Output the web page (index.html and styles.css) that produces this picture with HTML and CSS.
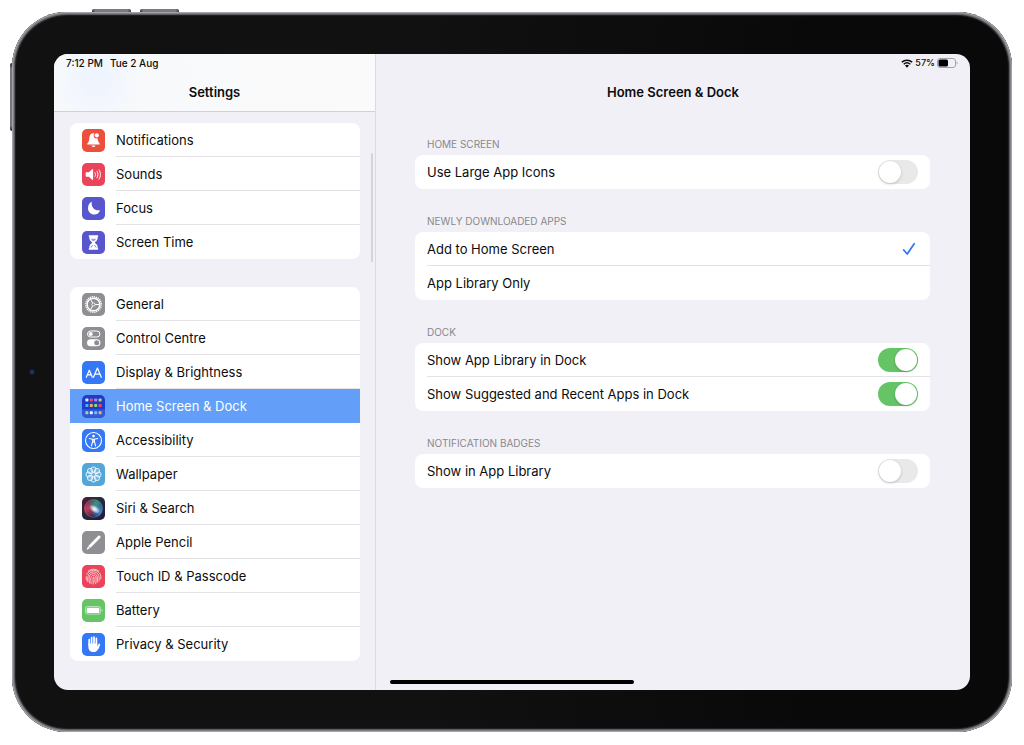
FILE: index.html
```html
<!DOCTYPE html>
<html lang="en-GB">
<head>
<meta charset="utf-8">
<meta name="viewport" content="width=device-width, initial-scale=1">
<title>Settings</title>
<link rel="stylesheet" href="styles.css">
</head>
<body>
<div class="device">
  <span class="hardware volume-up"></span>
  <span class="hardware volume-down"></span>
  <span class="hardware power"></span>
  <span class="camera"></span>
  <div class="screen">
    <aside class="sidebar">
      <header class="bar sidebar-bar">
        <div class="status"><span>7:12 PM</span><span>Tue 2 Aug</span></div>
        <h1 class="title">Settings</h1>
      </header>
      <nav class="menu" aria-label="Settings">
        <div class="card">
          <a class="item" href="#notifications">
            <svg class="icon" viewBox="0 0 23 23"><rect width="23" height="23" rx="5" fill="#eb4f3d"/><path d="M11.5 4.2c-2.8 0-4.1 2-4.1 4.4 0 3.1-.7 4.4-2 5.900-.5.6-.2 1.100.5 1.100h11.200c.7 0 1-.5.5-1.100-1.300-1.500-2-2.800-2-5.900 0-2.400-1.300-4.400-4.100-4.400zM9.600 16.400h3.800c-.2 1-1 1.600-1.900 1.600s-1.700-.6-1.900-1.600z" fill="#fff"/><circle cx="14.600" cy="6.500" r="2.900" fill="#eb4f3d"/><circle cx="14.800" cy="6.300" r="2.100" fill="#fff"/></svg>
            <span class="item-label">Notifications</span>
          </a>
          <a class="item" href="#sounds">
            <svg class="icon" viewBox="0 0 23 23"><rect width="23" height="23" rx="5" fill="#ea445a"/><path d="M4.300 9.300h2.500L10.200 6.300c.5-.4.9-.2.900.4v9.600c0 .6-.4.800-.9.400L6.800 13.700H4.300c-.4 0-.6-.3-.6-.7v-3c0-.4.2-.7.600-.7z" fill="#fff"/><path d="M13 9.700c.7 1.100.7 2.500 0 3.600M15 8.200c1.300 2 1.300 4.600 0 6.600M17 6.800c1.900 2.800 1.900 6.600 0 9.400" fill="none" stroke="#fff" stroke-width="1" stroke-linecap="round"/></svg>
            <span class="item-label">Sounds</span>
          </a>
          <a class="item" href="#focus">
            <svg class="icon" viewBox="0 0 23 23"><rect width="23" height="23" rx="5" fill="#5856ce"/><path d="M9.700 5.300c-.5 4.900 2.700 8.600 7.700 8 .4 0 .5.300.4.600-1 2.200-3 3.600-5.500 3.600-3.500 0-6.300-2.800-6.300-6.300 0-2.700 1.300-5.200 3.200-6.300.3-.2.600 0 .5.400z" fill="#fff"/></svg>
            <span class="item-label">Focus</span>
          </a>
          <a class="item" href="#screen-time">
            <svg class="icon" viewBox="0 0 23 23"><rect width="23" height="23" rx="5" fill="#5856ce"/><path d="M7.300 4.200h8.400c.8 0 .9 1.500 0 1.500.3 2.800-1 4.300-2.600 5.400-.4.300-.4.500 0 .8 1.600 1.100 2.900 2.600 2.600 5.400.9 0 .8 1.500 0 1.500H7.300c-.8 0-.9-1.500 0-1.500-.3-2.800 1-4.300 2.600-5.400.4-.3.400-.5 0-.8-1.600-1.100-2.900-2.600-2.600-5.400-.9 0-.8-1.500 0-1.500z" fill="#fff"/><path d="M8.900 7.800h5.200c-.5 1.300-1.300 1.900-2.100 2.500v3.400c1.300.5 2.300 1.300 2.700 2.800H8.300c.4-1.500 1.400-2.300 2.700-2.800v-3.400c-.8-.6-1.600-1.200-2.100-2.500z" fill="#5856ce" opacity=".6"/><path d="M11 10h1v4.500l2 2.500H9l2-2.500z" fill="#fff"/></svg>
            <span class="item-label">Screen Time</span>
          </a>
        </div>
        <div class="card">
          <a class="item" href="#general">
            <svg class="icon" viewBox="0 0 23 23"><rect width="23" height="23" rx="5" fill="#8e8e93"/><g fill="none" stroke="#fff"><circle cx="11.500" cy="11.500" r="7.700" stroke-width="1.500" stroke-dasharray="1.200 .816"/><circle cx="11.500" cy="11.500" r="6.300" stroke-width="1.400"/><circle cx="11.500" cy="11.500" r="1.600" stroke-width=".8"/><path d="M13.100 11.500h4.200M10.700 10.100 8.600 6.400M10.700 12.900l-2.100 3.700" stroke-width="1"/></g></svg>
            <span class="item-label">General</span>
          </a>
          <a class="item" href="#control-centre">
            <svg class="icon" viewBox="0 0 23 23"><rect width="23" height="23" rx="5" fill="#8e8e93"/><rect x="5.500" y="4" width="12.400" height="6" rx="3" fill="none" stroke="#fff"/><circle cx="8.700" cy="7" r="2" fill="#fff"/><rect x="5" y="12.300" width="13.400" height="7" rx="3.500" fill="#fff"/><circle cx="14.700" cy="15.800" r="2.500" fill="#8e8e93"/></svg>
            <span class="item-label">Control Centre</span>
          </a>
          <a class="item" href="#display">
            <svg class="icon" viewBox="0 0 23 23"><rect width="23" height="23" rx="5" fill="#3478f6"/><path d="M4.300 16.200 7.300 9.200l3 7M5.400 13.900h3.900M11.500 16.200l3.900-9.200 3.900 9.200M12.900 13.200h5" fill="none" stroke="#fff" stroke-width="1.200" stroke-linejoin="round" stroke-linecap="round"/></svg>
            <span class="item-label">Display &amp; Brightness</span>
          </a>
          <a class="item selected" href="#home-screen" aria-current="page">
            <svg class="icon" viewBox="0 0 23 23"><rect width="23" height="23" rx="5" fill="#1d3ccf"/><path d="M0 14.500h23V18a5 5 0 0 1-5 5H5a5 5 0 0 1-5-5z" fill="#3558d8"/><g><rect x="3.400" y="3.500" width="3" height="3" rx=".7" fill="#e6e9f6"/><rect x="7.800" y="3.500" width="3" height="3" rx=".7" fill="#ef4d54"/><rect x="12.200" y="3.500" width="3" height="3" rx=".7" fill="#c47be8"/><rect x="16.600" y="3.500" width="3" height="3" rx=".7" fill="#b5d65b"/><rect x="3.400" y="9" width="3" height="3" rx=".7" fill="#49b8ef"/><rect x="7.800" y="9" width="3" height="3" rx=".7" fill="#f2b33d"/><rect x="12.200" y="9" width="3" height="3" rx=".7" fill="#8fd96d"/><rect x="16.600" y="9" width="3" height="3" rx=".7" fill="#ef4d54"/><rect x="3.400" y="16.200" width="3" height="3" rx=".7" fill="#9be08c"/><rect x="7.800" y="16.200" width="3" height="3" rx=".7" fill="#f1f4ff"/><rect x="12.200" y="16.200" width="3" height="3" rx=".7" fill="#62cdf3"/><rect x="16.600" y="16.200" width="3" height="3" rx=".7" fill="#f4ad73"/></g></svg>
            <span class="item-label">Home Screen &amp; Dock</span>
          </a>
          <a class="item" href="#accessibility">
            <svg class="icon" viewBox="0 0 23 23"><rect width="23" height="23" rx="5" fill="#3478f6"/><circle cx="11.500" cy="11.500" r="8" fill="none" stroke="#fff" stroke-width="1.100"/><circle cx="11.500" cy="7.100" r="1.300" fill="#fff"/><path d="M7.300 9.500l3.300.7v2.500l-1.200 4.200M15.700 9.500l-3.300.7v2.500l1.200 4.200M10.800 10.200h1.400v2.800h-1.400z" fill="none" stroke="#fff" stroke-width="1.100" stroke-linecap="round" stroke-linejoin="round"/></svg>
            <span class="item-label">Accessibility</span>
          </a>
          <a class="item" href="#wallpaper">
            <svg class="icon" viewBox="0 0 23 23"><rect width="23" height="23" rx="5" fill="#55a6d8"/><g fill="#fff" fill-opacity=".1" stroke="#fff" stroke-width=".8"><circle cx="11.500" cy="6.500" r="2.600"/><circle cx="15" cy="8" r="2.600"/><circle cx="16.500" cy="11.500" r="2.600"/><circle cx="15" cy="15" r="2.600"/><circle cx="11.500" cy="16.500" r="2.600"/><circle cx="8" cy="15" r="2.600"/><circle cx="6.500" cy="11.500" r="2.600"/><circle cx="8" cy="8" r="2.600"/><circle cx="11.500" cy="11.500" r="2"/></g></svg>
            <span class="item-label">Wallpaper</span>
          </a>
          <a class="item" href="#siri">
            <svg class="icon" viewBox="0 0 23 23"><defs><linearGradient id="siri-base" x1="0" y1="0" x2="1" y2="1"><stop offset="0" stop-color="#5a1435"/><stop offset=".4" stop-color="#24303a"/><stop offset="1" stop-color="#211449"/></linearGradient><radialGradient id="siri-red" cx=".2" cy=".5" r=".55"><stop offset="0" stop-color="#d9375f"/><stop offset="1" stop-color="#d9375f" stop-opacity="0"/></radialGradient><radialGradient id="siri-teal" cx=".65" cy=".25" r=".5"><stop offset="0" stop-color="#3aa79c" stop-opacity=".9"/><stop offset="1" stop-color="#3aa79c" stop-opacity="0"/></radialGradient><radialGradient id="siri-blue" cx=".75" cy=".65" r=".4"><stop offset="0" stop-color="#4b9fe0"/><stop offset="1" stop-color="#4b8fe0" stop-opacity="0"/></radialGradient><radialGradient id="siri-glow"><stop offset="0" stop-color="#fff"/><stop offset=".4" stop-color="#fff" stop-opacity=".7"/><stop offset="1" stop-color="#fff" stop-opacity="0"/></radialGradient></defs><rect width="23" height="23" rx="5" fill="url(#siri-base)"/><circle cx="11.500" cy="11.500" r="9.500" fill="url(#siri-red)"/><circle cx="11.500" cy="11.500" r="9.500" fill="url(#siri-teal)"/><circle cx="11.500" cy="11.500" r="9.500" fill="url(#siri-blue)"/><ellipse cx="12.500" cy="12" rx="6" ry="3.600" transform="rotate(35 12.500 12)" fill="url(#siri-glow)"/><circle cx="11.500" cy="11.500" r="8.700" fill="none" stroke="#b0a0b3" stroke-opacity=".45" stroke-width=".7"/></svg>
            <span class="item-label">Siri &amp; Search</span>
          </a>
          <a class="item" href="#pencil">
            <svg class="icon" viewBox="0 0 23 23"><rect width="23" height="23" rx="5" fill="#8e8e93"/><path d="M16.300 4.700c1.100-.9 2.900.8 2.100 2L8.200 17l-2.700 1.600c-.6.300-1-.1-.7-.7l1.500-2.800z" fill="#fff"/><path d="M6.200 15.300l1.800 1.600" stroke="#8e8e93" stroke-width=".6"/></svg>
            <span class="item-label">Apple Pencil</span>
          </a>
          <a class="item" href="#touch-id">
            <svg class="icon" viewBox="0 0 23 23"><rect width="23" height="23" rx="5" fill="#ea445a"/><g fill="none" stroke="#fff" stroke-width=".75" stroke-linecap="round" opacity=".9"><path d="M6.200 6.200c3-2.700 7.600-2.700 10.600 0M4.700 9.200c2.600-5.200 11-5.200 13.600 0 .6 1.400.7 3.200.5 4.800M4.200 11.700c-.1 1.200 0 2.300.3 3.300M5.800 16.700c-.7-5.400.6-9.800 5.700-9.800 4.200 0 6.300 3.300 5.600 9.200M7.500 18c-1-5.600-.5-9.400 4-9.400 3.400 0 4.500 3.400 3.800 8.800M9.200 18.700c-1-5.100-.7-8.300 2.300-8.300s3 4 2.100 8.200M11.300 12.100c-.9.300-.5 3.700.1 6.900M11.700 12.100c.9.900.6 3.500.3 5"/></g></svg>
            <span class="item-label">Touch ID &amp; Passcode</span>
          </a>
          <a class="item" href="#battery">
            <svg class="icon" viewBox="0 0 23 23"><rect width="23" height="23" rx="5" fill="#65c466"/><rect x="3.400" y="7.500" width="15.200" height="7.600" rx="2" fill="none" stroke="#fff" stroke-opacity=".65" stroke-width=".8"/><rect x="4.700" y="8.700" width="12.600" height="5.200" rx="1" fill="#fff"/><path d="M19.700 10v2.600c1.200-.3 1.200-2.300 0-2.600z" fill="#fff" opacity=".75"/></svg>
            <span class="item-label">Battery</span>
          </a>
          <a class="item" href="#privacy">
            <svg class="icon" viewBox="0 0 23 23"><rect width="23" height="23" rx="5" fill="#3478f6"/><path d="M7.200 12V6.500M9.600 11.500V4.700M12 11.500V4.200M14.400 12V5.400" stroke="#fff" stroke-width="1.700" stroke-linecap="round"/><path d="M6.350 10.500h8.900v2.700l1.500-2.300c.6-.8 1.700-.3 1.400.6-1.100 3.500-2.400 7.600-6.700 7.600-3.700 0-5.100-2.600-5.100-5.600z" fill="#fff"/></svg>
            <span class="item-label">Privacy &amp; Security</span>
          </a>
        </div>
      </nav>
      <span class="scroll-thumb"></span>
    </aside>
    <main class="detail">
      <header class="bar">
        <div class="status status-end">
          <svg class="wifi" viewBox="0 0 12 9"><g fill="none" stroke="#0a0a0a" stroke-width="1.500"><path d="M.8 3.300c2.900-2.800 7.500-2.800 10.400 0M2.700 5.200c1.900-1.700 4.700-1.700 6.600 0"/></g><path d="M4 6.600c1.200-1 2.800-1 4 0L6 8.700z" fill="#0a0a0a"/></svg>
          <span>57%</span>
          <svg class="battery" viewBox="0 0 21 10"><rect x=".5" y=".5" width="18" height="9" rx="2.500" fill="none" stroke="#a3a3a8"/><rect x="1.500" y="1.500" width="9.500" height="7" rx="1.500" fill="#000"/><path d="M19.600 3.500v3c1.300-.4 1.300-2.600 0-3z" fill="#a3a3a8"/></svg>
        </div>
        <h2 class="title">Home Screen &amp; Dock</h2>
      </header>
      <div class="sections">
        <section>
          <h3 class="section-label">HOME SCREEN</h3>
          <div class="card">
            <label class="option"><span>Use Large App Icons</span><input class="switch" type="checkbox" role="switch"></label>
          </div>
        </section>
        <section>
          <h3 class="section-label">NEWLY DOWNLOADED APPS</h3>
          <div class="card">
            <label class="option"><span>Add to Home Screen</span><input class="choice" type="radio" name="new-apps" checked><svg class="tick" viewBox="0 0 14 14"><path d="M1.700 8l3.500 4L12.200 1.800" fill="none" stroke="#3478f6" stroke-width="1.800" stroke-linecap="round" stroke-linejoin="round"/></svg></label>
            <label class="option"><span>App Library Only</span><input class="choice" type="radio" name="new-apps"><svg class="tick" viewBox="0 0 14 14"><path d="M1.700 8l3.500 4L12.200 1.800" fill="none" stroke="#3478f6" stroke-width="1.800" stroke-linecap="round" stroke-linejoin="round"/></svg></label>
          </div>
        </section>
        <section>
          <h3 class="section-label">DOCK</h3>
          <div class="card">
            <label class="option"><span>Show App Library in Dock</span><input class="switch" type="checkbox" role="switch" checked></label>
            <label class="option"><span>Show Suggested and Recent Apps in Dock</span><input class="switch" type="checkbox" role="switch" checked></label>
          </div>
        </section>
        <section>
          <h3 class="section-label">NOTIFICATION BADGES</h3>
          <div class="card">
            <label class="option"><span>Show in App Library</span><input class="switch" type="checkbox" role="switch"></label>
          </div>
        </section>
      </div>
    </main>
    <span class="home-indicator"></span>
  </div>
</div>
</body>
</html>
```
FILE: styles.css
```css
* { box-sizing: border-box; }

body {
  margin: 0;
  padding: 12px 12px 13px;
  min-height: 100vh;
  display: flex;
  background: #fff;
  color: #0c0c0d;
  font: 13px/18px Inter, "Liberation Sans", sans-serif;
}

h1, h2, h3 { margin: 0; }

.device {
  position: relative;
  flex: 1;
  display: flex;
  padding: 42px;
  border-radius: 55px;
  background: linear-gradient(90deg, #111 40%, #090909 80%);
  box-shadow: inset 0 0 0 1px #a2a3a7, inset 0 0 0 2px #808185, inset 0 0 0 3px #5b5c60, inset 0 0 1px 4px #222326;
}

/* Physical buttons and camera on the casing */
.hardware { position: absolute; background: linear-gradient(90deg, #333, #7b7c80 8%, #7b7c80 92%, #333); }
.volume-up, .volume-down { top: -3px; width: 39px; height: 3px; border-radius: 2px 2px 0 0; }
.volume-up { left: 80px; }
.volume-down { left: 128px; }
.power { left: -2px; top: 51px; width: 2px; height: 68px; border-radius: 2px 0 0 2px; background: linear-gradient(#222, #77787c 8%, #77787c 92%, #222); }
.camera { position: absolute; left: 17px; top: 50%; width: 6px; height: 6px; margin-top: -3px; border-radius: 50%; background: radial-gradient(#20366f 20%, #151b38 60%, #111); }

.screen {
  position: relative;
  flex: 1;
  display: grid;
  grid-template-columns: minmax(240px, 322px) 1fr;
  overflow: hidden;
  border-radius: 14px;
  background: #f1f0f6;
}

.sidebar { position: relative; border-right: 1px solid #dcdbe0; }

.bar { height: 57px; padding-top: 2px; }
.sidebar-bar {
  height: 58px;
  border-bottom: 1px solid #d2d2d5;
  background: radial-gradient(circle at 42px 26px, #edf4ff, #f2f6fd 20px, #f8f9fa 50px, #fafafa 100%);
}
.status { display: flex; gap: 7px; height: 14px; padding: 0 12px; font-size: 10px; line-height: 14px; font-weight: 500; }
.status-end { justify-content: flex-end; align-items: center; gap: 2px; font-size: 9px; }
.wifi { width: 12px; height: 9px; }
.battery { width: 21px; height: 10px; }
.title { margin-top: 13px; font-size: 13px; line-height: 18px; font-weight: 600; text-align: center; }

.menu { display: flex; flex-direction: column; gap: 28px; padding: 11px 15px 28px 16px; }
.card { overflow: hidden; border-radius: 8px; background: #fff; }

.item { display: flex; align-items: center; gap: 11px; height: 34px; padding-left: 12px; color: inherit; text-decoration: none; }
.icon { flex: none; width: 23px; height: 23px; }
.item-label { flex: 1; height: 34px; line-height: 34px; border-bottom: 1px solid #e3e3e6; }
.item:last-child .item-label { border-bottom: 0; }
.item.selected { background: #639ff8; color: #fff; }
.item.selected .item-label { border-bottom-color: transparent; }

.scroll-thumb { position: absolute; right: 2px; top: 99px; width: 2px; height: 109px; border-radius: 1px; background: #d5d4da; }

.sections { display: flex; flex-direction: column; gap: 24px; padding: 25px 40px 40px 39px; }
.section-label { margin-bottom: 3px; padding-left: 12px; font-size: 10px; line-height: 16px; font-weight: 400; color: #88888d; }

.option { position: relative; display: flex; align-items: center; justify-content: space-between; height: 34px; padding: 0 12px; }
.option + .option::before { content: ""; position: absolute; left: 12px; right: 0; top: -1px; height: 1px; background: #e3e3e6; }

.switch { appearance: none; flex: none; display: flex; width: 40px; height: 24px; margin: 0; padding: 1px; border-radius: 12px; background: #e9e9ea; }
.switch::before { content: ""; width: 22px; height: 22px; border-radius: 50%; background: #fff; box-shadow: 0 1px 3px rgba(0, 0, 0, 0.2); }
.switch:checked { justify-content: flex-end; background: #65c466; }

.choice { appearance: none; margin: 0; width: 0; height: 0; }
.tick { width: 14px; height: 14px; margin-left: auto; margin-right: 2px; visibility: hidden; }
.choice:checked + .tick { visibility: visible; }

.home-indicator { position: absolute; left: 50%; bottom: 6px; width: 244px; height: 4px; border-radius: 2px; background: #000; transform: translateX(-50%); }
```
